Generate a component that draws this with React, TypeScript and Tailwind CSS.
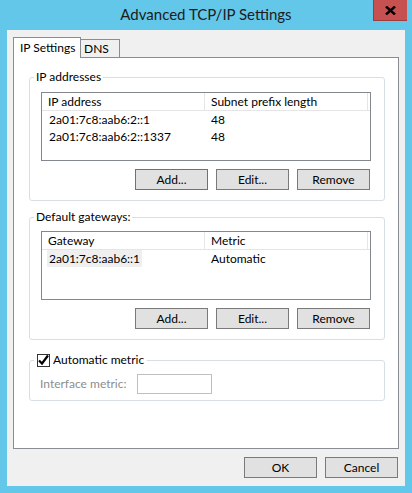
import React from 'react';

const listBorder = 'border border-[#828790]';

function WinButton({ label, focused }: { label: string; focused?: boolean }) {
  return (
    <div
      className={`w-[73px] h-[21px] flex items-center justify-center bg-[#e1e1e1] border ${
        focused ? 'border-[#3c7fb1]' : 'border-[#7a7a7a]'
      }`}
    >
      {label}
    </div>
  );
}

function ListView({ cols, rows, selectFirst }: { cols: string[]; rows: string[][]; selectFirst?: boolean }) {
  return (
    <div className={`w-[330px] h-[69px] bg-white ${listBorder}`}>
      <div className="flex h-[18px] border-b border-[#e5e5e5]">
        {cols.map((c) => (
          <div key={c} className="w-[163px] pl-[6px] border-r border-[#e5e5e5] flex items-center leading-[16px]">
            {c}
          </div>
        ))}
      </div>
      {rows.map((r, i) => (
        <div key={i} className="flex h-[17px] items-center leading-[16px]">
          <div className="w-[163px] pl-[5px]">
            <span className={`px-[2px] py-[1px] ${selectFirst && i === 0 ? 'bg-[#efefef]' : ''}`}>{r[0]}</span>
          </div>
          <div className="w-[163px] pl-[6px]">{r[1]}</div>
        </div>
      ))}
    </div>
  );
}

export default function App() {
  return (
    <div className="w-[412px] h-[493px] bg-[#63c7e9] flex flex-col font-['Lato','Noto_Sans',sans-serif] text-[12px] text-black whitespace-nowrap">
      {/* title bar */}
      <div className="relative h-[30px] flex items-center justify-center text-[15px] text-[#1b1b1b] pb-[1px]">
        Advanced TCP/IP Settings
        <div className="absolute left-[373px] top-0 w-[34px] h-[21px] bg-[#c75050] border-l border-b border-[#9e3b3b] flex items-center justify-center">
          <svg width="11" height="9" viewBox="0 0 11 9">
            <path d="M1 0.5 L10 8.5 M10 0.5 L1 8.5" stroke="#000" strokeWidth="2.4" />
          </svg>
        </div>
      </div>

      {/* client area */}
      <div className="mx-[7px] h-[456px] bg-[#f0f0f0] flex flex-col px-[6px] pt-[7px]">
        {/* tabs */}
        <div className="flex items-end h-[20px]">
          <div className="relative z-10 -mb-px w-[68px] h-[21px] bg-white border border-b-0 border-[#898c95] pl-[6px] flex items-center leading-[16px]">
            IP Settings
          </div>
          <div className="w-[39px] h-[18px] bg-[#f0f0f0] border-t border-r border-[#898c95] pl-[3px] flex items-center leading-[16px] pt-[1px]">
            DNS
          </div>
        </div>

        {/* tab panel */}
        <div className="h-[392px] bg-white border border-[#898c95] pl-[15px] pr-[13px] pt-[11px] flex flex-col">
          <fieldset className="border border-[#d5dfe5] rounded-[3px] pb-[10px]">
            <legend className="ml-[4px] px-[2px] leading-[16px]">IP addresses</legend>
            <div className="pl-[11px] pr-[13px] pt-[7px]">
              <ListView
                cols={['IP address', 'Subnet prefix length']}
                rows={[
                  ['2a01:7c8:aab6:2::1', '48'],
                  ['2a01:7c8:aab6:2::1337', '48'],
                ]}
              />
              <div className="mt-[8px] flex justify-end gap-[8px] pr-[1px]">
                <WinButton label="Add..." focused />
                <WinButton label="Edit..." />
                <WinButton label="Remove" />
              </div>
            </div>
          </fieldset>

          <fieldset className="mt-[8px] border border-[#d5dfe5] rounded-[3px] pb-[10px]">
            <legend className="ml-[4px] px-[2px] leading-[16px]">Default gateways:</legend>
            <div className="pl-[11px] pr-[13px] pt-[6px]">
              <ListView cols={['Gateway', 'Metric']} rows={[['2a01:7c8:aab6::1', 'Automatic']]} selectFirst />
              <div className="mt-[8px] flex justify-end gap-[8px] pr-[1px]">
                <WinButton label="Add..." />
                <WinButton label="Edit..." />
                <WinButton label="Remove" />
              </div>
            </div>
          </fieldset>

          <fieldset className="mt-[12px] border border-[#d5dfe5] rounded-[3px] pb-[6px]">
            <legend className="ml-[4px] px-[3px] leading-[16px] flex items-center gap-[3px]">
              <span className="w-[13px] h-[13px] border border-[#333] bg-white flex items-center justify-center overflow-visible">
                <svg width="13" height="13" viewBox="0 0 13 13" className="overflow-visible">
                  <path d="M2 6.5 L5 9.5 L11 1.5" stroke="#000" strokeWidth="2.2" fill="none" />
                </svg>
              </span>
              Automatic metric
            </legend>
            <div className="pl-[10px] pt-[6px] flex items-center">
              <span className="w-[97px] text-[#8d8d8d]">Interface metric:</span>
              <div className="w-[75px] h-[20px] bg-white border border-[#bfbfbf]" />
            </div>
          </fieldset>
        </div>

        {/* dialog buttons */}
        <div className="mt-[8px] flex justify-end gap-[8px] pr-[1px]">
          <WinButton label="OK" />
          <WinButton label="Cancel" />
        </div>
      </div>
    </div>
  );
}
